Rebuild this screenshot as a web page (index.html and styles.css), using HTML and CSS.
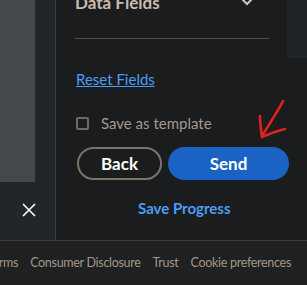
FILE: index.html
```html
<!DOCTYPE html>
<html lang="en">
<head>
  <meta charset="UTF-8">
  <meta name="viewport" content="width=device-width, initial-scale=1.0">
  <title>Send Agreement</title>
  <link rel="stylesheet" href="styles.css">
</head>
<body>
  <div class="page">
    <div class="workspace">
      <!-- Left rail -->
      <div class="rail">
        <div class="preview"></div>
        <button class="close" aria-label="Close">
          <svg width="14" height="14" viewBox="0 0 14 14">
            <path d="M1 1 L13 13 M13 1 L1 13" stroke="#fff" stroke-width="1.6" fill="none"/>
          </svg>
        </button>
      </div>

      <!-- Side panel -->
      <div class="panel">
        <div class="scroll-thumb"></div>
        <div class="section-head">
          <h2>Data Fields</h2>
          <svg class="chevron" width="16" height="10" viewBox="0 0 16 10">
            <path d="M2 1 L8 7 L14 1" stroke="#c9c9c9" stroke-width="2" fill="none"/>
          </svg>
        </div>

        <a href="#" class="reset">Reset Fields</a>

        <label class="template">
          <span class="box"></span>
          Save as template
        </label>

        <div class="actions">
          <button class="btn back">Back</button>
          <button class="btn send">Send</button>
          <!-- hand drawn pointer -->
          <svg class="pointer" width="32" height="42" viewBox="0 0 32 42">
            <path d="M27 2 C22 12 14 24 6 37" stroke="#e3211c" stroke-width="2.6" fill="none" stroke-linecap="round"/>
            <path d="M4 17 C4 24 5 31 6 38 C13 35 21 32 29 30" stroke="#e3211c" stroke-width="2.6" fill="none" stroke-linecap="round" stroke-linejoin="round"/>
          </svg>
        </div>

        <a href="#" class="save-progress">Save Progress</a>
      </div>
    </div>

    <div class="footer">
      <a href="#">Terms</a>
      <a href="#">Consumer Disclosure</a>
      <a href="#">Trust</a>
      <a href="#">Cookie preferences</a>
    </div>
  </div>
</body>
</html>
```

FILE: styles.css
```css
* {
  margin: 0;
  padding: 0;
  box-sizing: border-box;
}

body {
  background: #1b1c1e;
  font-family: 'Lato', 'Noto Sans', sans-serif;
  overflow: hidden;
}

.page {
  width: 307px;
  height: 285px;
  display: flex;
  flex-direction: column;
}

.workspace {
  height: 241px;
  display: flex;
  border-bottom: 1px solid #3a3c3f;
}

/* Left rail */
.rail {
  width: 56px;
  background: #232628;
  border-right: 1px solid #3a3c3f;
  display: flex;
  flex-direction: column;
}

.preview {
  width: 35px;
  height: 182px;
  background: #46494c;
}

.close {
  background: none;
  border: none;
  width: 14px;
  height: 14px;
  margin: 21px 0 0 22px;
  display: flex;
}

/* Panel */
.panel {
  flex: 1;
  position: relative;
  padding: 0 0 0 19px;
  display: flex;
  flex-direction: column;
}

.scroll-thumb {
  position: absolute;
  top: 0;
  right: 0;
  width: 20px;
  height: 58px;
  background: #212426;
}

.section-head {
  width: 194px;
  height: 47px;
  margin-top: -9px;
  display: flex;
  justify-content: space-between;
  align-items: flex-start;
  border-bottom: 1px solid #4a4a4b;
  box-sizing: content-box;
}

.section-head h2 {
  font-size: 17px;
  font-weight: 700;
  color: #c6bdb0;
  line-height: 24px;
}

.chevron {
  margin: 6px 14px 0 0;
}

.reset {
  align-self: flex-start;
  margin-top: 31px;
  margin-left: 1px;
  font-size: 15px;
  line-height: 18px;
  color: #4b9df4;
  text-decoration: underline;
}

.template {
  display: flex;
  align-items: center;
  gap: 12px;
  margin-top: 26px;
  margin-left: 1px;
  font-size: 15px;
  line-height: 18px;
  color: #a29a8f;
}

.box {
  width: 13px;
  height: 13px;
  border: 2px solid #6a6a6a;
  border-radius: 2px;
}

.actions {
  position: relative;
  display: flex;
  gap: 6px;
  margin-top: 15px;
  margin-left: 2px;
}

.btn {
  height: 33px;
  border-radius: 17px;
  font-family: inherit;
  font-size: 17px;
  font-weight: 700;
  color: #fff;
}

.back {
  width: 85px;
  background: transparent;
  border: 2px solid #7d7366;
}

.send {
  width: 121px;
  background: #1a62c4;
  border: none;
}

.pointer {
  position: absolute;
  left: 179px;
  top: -48px;
}

.save-progress {
  align-self: flex-start;
  margin: 19px 0 0 63px;
  font-size: 15px;
  font-weight: 700;
  line-height: 18px;
  color: #4b9df4;
  text-decoration: none;
}

/* Footer */
.footer {
  flex: 1;
  background: #1f2022;
  display: flex;
  justify-content: flex-end;
  align-items: center;
  gap: 12px;
  padding: 0 16px 2px 0;
  white-space: nowrap;
  overflow: hidden;
}

.footer a {
  font-size: 12.5px;
  letter-spacing: -0.3px;
  color: #a39786;
  text-decoration: none;
}
```
